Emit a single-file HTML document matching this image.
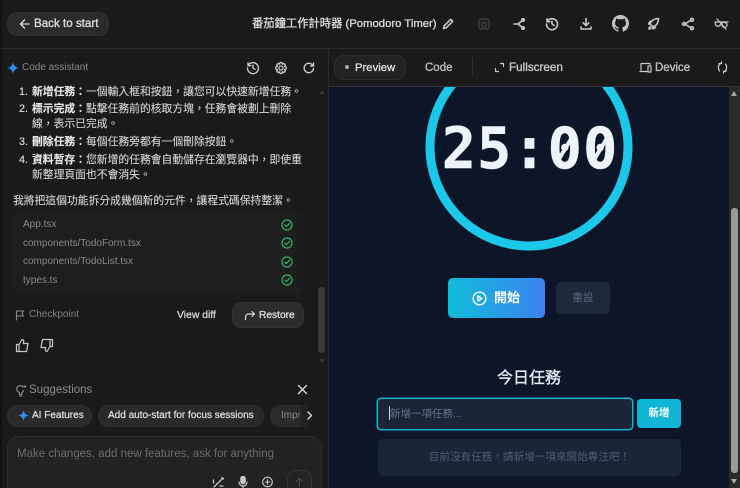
<!DOCTYPE html>
<html><head><meta charset="utf-8"><style>
*{box-sizing:border-box}
html,body{margin:0;padding:0;width:740px;height:488px;overflow:hidden;background:#1a1a1a}
#r{position:relative;width:740px;height:488px;overflow:hidden;background:#1a1a1a;color:#dcdcdc;font-family:"Liberation Sans","Noto Sans CJK TC",sans-serif}
.a{position:absolute;white-space:nowrap}
svg{position:absolute;fill:none;stroke:#c8c8c8;stroke-width:1.6;stroke-linecap:round;stroke-linejoin:round}
.m{-webkit-text-stroke:.35px currentColor}
.zh{font-size:10.8px;line-height:16px;color:#d4d4d4;-webkit-text-stroke:.12px currentColor}
.zh b{color:#e6e6e6}
.zh i{font-style:normal;display:inline-block;width:13px;color:#e0e0e0}
.f{font-size:10px;color:#8a8a8a;left:23px}
.chip{position:absolute;top:405px;height:22px;border-radius:11px;background:#2a2a2a;border:1px solid #303030;font-size:10px;color:#d8d8d8;line-height:20px;white-space:nowrap;overflow:hidden;-webkit-text-stroke:.3px currentColor}
</style></head><body><div id="r">
<div class="a" style="left:0;top:0;width:2px;height:488px;background:#111"></div>
<div class="a" style="left:0;top:48px;width:740px;height:1px;background:#2a2a2a"></div>
<div class="a" style="left:7px;top:12px;width:102px;height:24px;border-radius:10px;background:#2b2b2b;border:1px solid #313131"></div>
<svg style="left:19px;top:18px" width="11" height="12" viewBox="0 0 11 12"><path d="M10 6H1.500M5.500 2L1.500 6l4 4" stroke="#ddd" stroke-width="1.300"/></svg>
<div class="a m" style="left:34px;top:17px;font-size:11.600px;color:#ddd;line-height:14px">Back to start</div>
<div class="a m" style="left:252px;top:16px;font-size:11.300px;color:#d8d8d8;line-height:16px">番茄鐘工作計時器 (Pomodoro Timer)</div>
<svg style="left:441px;top:17px" width="14" height="14" viewBox="0 0 14 14"><path d="M2.500 11.500l.7-2.700 6.500-6.500 2 2-6.500 6.500z"/></svg>
<svg style="left:478px;top:18px;stroke:#3c3c3c" width="12" height="12" viewBox="0 0 12 12"><rect x="1" y="1" width="10" height="10" rx="2"/><rect x="4" y="5" width="4" height="4"/></svg>
<svg style="left:512px;top:17px" width="14" height="14" viewBox="0 0 14 14"><path d="M2 7h4l5-4M6 7l5 4"/><circle cx="11" cy="3" r="1.200"/><circle cx="11" cy="11" r="1.200"/></svg>
<svg style="left:545px;top:17px" width="14" height="14" viewBox="0 0 14 14"><path d="M2.200 4.500A5.500 5.500 0 1 1 1.500 7M2 1.800v2.900h2.900M7 4.200V7l2 1.300"/></svg>
<svg style="left:579px;top:17px" width="14" height="14" viewBox="0 0 14 14"><path d="M7 1.500v7M4.200 5.800L7 8.600l2.800-2.800M2 10v2h10v-2"/></svg>
<svg style="left:612px;top:15px;fill:#c4c4c4;stroke:none" width="17" height="17" viewBox="0 0 16 16"><path d="M8 0C3.580 0 0 3.580 0 8c0 3.540 2.290 6.530 5.470 7.590.4.070.55-.17.550-.38 0-.19-.01-.82-.01-1.490-2.010.37-2.530-.49-2.690-.94-.09-.23-.48-.94-.82-1.130-.28-.15-.68-.52-.01-.53.630-.01 1.080.58 1.230.82.720 1.210 1.870.87 2.330.66.070-.52.280-.87.510-1.070-1.780-.2-3.640-.89-3.640-3.950 0-.87.310-1.590.82-2.150-.08-.2-.36-1.020.08-2.120 0 0 .67-.21 2.200.82.640-.18 1.320-.27 2-.27s1.360.09 2 .27c1.530-1.040 2.200-.82 2.200-.82.440 1.100.16 1.920.08 2.120.51.560.82 1.270.82 2.150 0 3.070-1.870 3.750-3.650 3.950.29.250.54.730.54 1.480 0 1.070-.01 1.930-.01 2.200 0 .21.150.460.550.380A8.010 8.010 0 0 0 16 8c0-4.420-3.580-8-8-8z"/></svg>
<svg style="left:647px;top:17px" width="14" height="14" viewBox="0 0 14 14"><path d="M5 9l-2-2c1-3 4-5.500 8.500-5.500C11.500 6 9 9 6 10zM3 7H1.500l1.500-2.500M6 10.500v1.500l2.500-1.500M3 10c-1 .5-1 2-1 2s1.500 0 2-1"/></svg>
<svg style="left:681px;top:17px" width="14" height="14" viewBox="0 0 14 14"><path d="M4 7l6-4M4 7l6 4"/><circle cx="3" cy="7" r="1.400"/><circle cx="11" cy="2.800" r="1.400"/><circle cx="11" cy="11.200" r="1.400"/></svg>
<svg style="left:714px;top:17px" width="15" height="14" viewBox="0 0 15 14"><path d="M1.500 5.500a2.500 2.500 0 0 0 5 2c1-1.500 2-2 3.500-2a2.500 2.500 0 0 1 3 2 2.500 2.500 0 0 1-5 .5M3 2l9 10M1 5h13" stroke-width="1.300"/></svg>

<svg style="left:7px;top:62px;fill:#2f8cf0;stroke:none" width="12" height="12" viewBox="0 0 12 12"><path d="M6 0C6.500 3.500 8.500 5.500 12 6 8.500 6.500 6.500 8.500 6 12 5.500 8.500 3.500 6.500 0 6 3.500 5.500 5.500 3.500 6 0z"/></svg>
<div class="a" style="left:22px;top:61px;font-size:10px;color:#888;line-height:14px">Code assistant</div>
<svg style="left:246px;top:61px" width="14" height="14" viewBox="0 0 14 14"><path d="M2.200 4.500A5.500 5.500 0 1 1 1.500 7M2 1.800v2.900h2.900M7 4.200V7l2 1.300" stroke-width="1.400"/></svg>
<svg style="left:274px;top:61px" width="14" height="14" viewBox="0 0 14 14"><circle cx="7" cy="7" r="2" stroke-width="1.300"/><path d="M6 1.500h2l.4 1.700 1.600-.7 1.400 1.400-.9 1.500 1.700.6v2l-1.700.5.900 1.600-1.400 1.400-1.600-.8-.4 1.800H6l-.4-1.800-1.600.8-1.400-1.400.9-1.600-1.700-.5v-2l1.700-.6-.9-1.500L4 2.500l1.600.7z" stroke-width="1.300"/></svg>
<svg style="left:302px;top:61px" width="14" height="14" viewBox="0 0 14 14"><path d="M11.500 7.500A4.700 4.700 0 1 1 10 3.500l1.500 1.500M11.500 2v3h-3" stroke-width="1.400"/></svg>

<div class="a" style="left:328px;top:49px;width:1px;height:439px;background:#2a2a2a"></div>
<div class="a" style="left:334px;top:55px;width:72px;height:25px;border-radius:10px;background:#232323;border:1px solid #2f2f2f"></div>
<div class="a" style="left:345px;top:65px;width:4px;height:4px;border-radius:50%;background:#aaa"></div>
<div class="a m" style="left:355px;top:61px;font-size:11.300px;color:#ddd;line-height:14px">Preview</div>
<div class="a m" style="left:425px;top:61px;font-size:11.500px;color:#bbb;line-height:14px">Code</div>
<div class="a" style="left:472px;top:58px;width:1px;height:19px;background:#2e2e2e"></div>
<svg style="left:494px;top:62px" width="11" height="11" viewBox="0 0 11 11"><path d="M1.500 6.500v3h3M6.500 1.500h3v3" stroke-width="1.200"/></svg>
<div class="a m" style="left:509px;top:61px;font-size:11.700px;color:#c8c8c8;line-height:14px">Fullscreen</div>
<svg style="left:639px;top:61px" width="13" height="13" viewBox="0 0 13 13"><path d="M2 9V2.500h9v1M1 10.500h7M9 5h3v6H9z" stroke-width="1.200"/></svg>
<div class="a m" style="left:655px;top:61px;font-size:11.500px;color:#c0c0c0;line-height:14px">Device</div>
<svg style="left:716px;top:61px" width="13" height="13" viewBox="0 0 13 13"><path d="M5 2.500C2.500 3 1.500 7 3.500 10M8 10.500c2.500-.5 3.500-4.500 1.500-7.500M3 2.500h2.500V1M10 10.500H7.500V12" stroke-width="1.300"/></svg>

<!-- chat text -->
<div class="a zh" style="left:19px;top:84px"><i>1.</i><b>新增任務：</b>一個輸入框和按鈕，讓您可以快速新增任務。</div>
<div class="a zh" style="left:19px;top:101px"><i>2.</i><b>標示完成：</b>點擊任務前的核取方塊，任務會被劃上刪除</div>
<div class="a zh" style="left:32px;top:116px">線，表示已完成。</div>
<div class="a zh" style="left:19px;top:134px"><i>3.</i><b>刪除任務：</b>每個任務旁都有一個刪除按鈕。</div>
<div class="a zh" style="left:19px;top:152px"><i>4.</i><b>資料暫存：</b>您新增的任務會自動儲存在瀏覽器中，即使重</div>
<div class="a zh" style="left:32px;top:167px">新整理頁面也不會消失。</div>
<div class="a zh" style="left:13px;top:193px">我將把這個功能拆分成幾個新的元件，讓程式碼保持整潔。</div>

<div class="a" style="left:13px;top:212px;width:290px;height:81px;border-radius:6px;background:#1e1e1e"></div>
<div class="a f" style="top:218px;line-height:14px">App.tsx</div>
<div class="a f" style="top:237px;line-height:14px">components/TodoForm.tsx</div>
<div class="a f" style="top:255px;line-height:14px">components/TodoList.tsx</div>
<div class="a f" style="top:274px;line-height:14px">types.ts</div>
<svg style="left:281px;top:219px;stroke:#2fb566" width="12" height="12" viewBox="0 0 12 12"><circle cx="6" cy="6" r="5" stroke-width="1.200"/><path d="M3.700 6l1.600 1.600L8.500 4.400" stroke-width="1.200"/></svg>
<svg style="left:281px;top:237px;stroke:#2fb566" width="12" height="12" viewBox="0 0 12 12"><circle cx="6" cy="6" r="5" stroke-width="1.200"/><path d="M3.700 6l1.600 1.600L8.500 4.400" stroke-width="1.200"/></svg>
<svg style="left:281px;top:256px;stroke:#2fb566" width="12" height="12" viewBox="0 0 12 12"><circle cx="6" cy="6" r="5" stroke-width="1.200"/><path d="M3.700 6l1.600 1.600L8.500 4.400" stroke-width="1.200"/></svg>
<svg style="left:281px;top:274px;stroke:#2fb566" width="12" height="12" viewBox="0 0 12 12"><circle cx="6" cy="6" r="5" stroke-width="1.200"/><path d="M3.700 6l1.600 1.600L8.500 4.400" stroke-width="1.200"/></svg>

<svg style="left:14px;top:309px;stroke:#8a8a8a" width="12" height="12" viewBox="0 0 12 12"><path d="M2.500 11V2h7L8 4.500 9.500 7h-7" stroke-width="1.100"/></svg>
<div class="a" style="left:29px;top:308px;font-size:10px;color:#808080;line-height:14px">Checkpoint</div>
<div class="a m" style="left:177px;top:309px;font-size:10.400px;color:#cfcfcf;line-height:14px">View diff</div>
<div class="a" style="left:232px;top:302px;width:72px;height:26px;border-radius:10px;background:#2c2c2c;border:1px solid #333"></div>
<svg style="left:244px;top:309px" width="12" height="12" viewBox="0 0 12 12"><path d="M10.500 5h-6a3 3 0 0 0-3 3v2.500M8 2.500L10.500 5 8 7.500" stroke-width="1.200" stroke="#ddd"/></svg>
<div class="a m" style="left:259px;top:309px;font-size:10.200px;color:#d8d8d8;line-height:14px">Restore</div>
<svg style="left:15px;top:338px" width="15" height="15" viewBox="0 0 15 15"><path d="M1.500 6.500h2.500v7H1.500zM4 6.500L7 1.500c1.200 0 2 1 1.700 2.200L8.300 5.500H13l-1.500 8H4" stroke-width="1.200"/></svg>
<svg style="left:39px;top:338px" width="15" height="15" viewBox="0 0 15 15"><path d="M13.500 8.500H11v-7h2.500zM11 8.500L8 13.500c-1.200 0-2-1-1.700-2.200l.4-1.800H2l1.500-8H11" stroke-width="1.200"/></svg>

<!-- left scrollbar -->
<div class="a" style="left:318px;top:287px;width:7px;height:66px;border-radius:4px;background:#3a3a3a"></div>
<div class="a" style="left:319px;top:90px;border:3px solid transparent;border-bottom:4px solid #3a3a3a;border-top:0"></div>
<div class="a" style="left:319px;top:359px;border:3px solid transparent;border-top:4px solid #3a3a3a;border-bottom:0"></div>

<svg style="left:15px;top:384px;stroke:#8f8f8f" width="13" height="13" viewBox="0 0 13 13"><path d="M8 3a3.500 3.500 0 1 0-3.500 5.500V10.500H7V8.500c.7-.4 1.200-1 1.500-1.800M4.500 12H7" stroke-width="1.100"/><path d="M10 1.500v2M9 2.500h2" stroke-width="1"/></svg>
<div class="a" style="left:29px;top:383px;font-size:11.500px;color:#8c8c8c;line-height:15px">Suggestions</div>
<svg style="left:296px;top:383px" width="13" height="13" viewBox="0 0 13 13"><path d="M2.500 2.500l8 8M10.500 2.500l-8 8" stroke="#ddd" stroke-width="1.300"/></svg>

<div class="chip" style="left:7px;width:85px;padding-left:24px">AI Features</div>
<svg style="left:18px;top:410px;fill:#2f8cf0;stroke:none" width="11" height="11" viewBox="0 0 12 12"><path d="M6 0C6.500 3.500 8.500 5.500 12 6 8.500 6.500 6.500 8.500 6 12 5.500 8.500 3.500 6.500 0 6 3.500 5.500 5.500 3.500 6 0z"/></svg>
<div class="chip" style="left:98px;width:166px;padding-left:9px">Add auto-start for focus sessions</div>
<div class="chip" style="left:270px;width:52px;padding-left:10px;border-radius:11px 0 0 11px;border-right:0;color:#8a8a8a;-webkit-text-stroke:0">Impr</div>
<div class="a" style="left:296px;top:404px;width:28px;height:24px;background:linear-gradient(90deg,rgba(26,26,26,0),#1a1a1a 55%)"></div>
<svg style="left:304px;top:410px" width="11" height="11" viewBox="0 0 11 11"><path d="M4 2l3.500 3.500L4 9" stroke="#ddd" stroke-width="1.300"/></svg>

<div class="a" style="left:7px;top:436px;width:315px;height:70px;border-radius:12px;background:#222;border:1px solid #2e2e2e"></div>
<div class="a" style="left:17px;top:447px;font-size:11.500px;color:#6c6c6c;line-height:15px">Make changes, add new features, ask for anything</div>
<svg style="left:212px;top:476px" width="13" height="12" viewBox="0 0 13 12"><path d="M2 11l8-8M1.500 4v3M8 10h3M10 1.500l1.500 1.500" stroke-width="1.300"/></svg>
<svg style="left:237px;top:476px" width="12" height="12" viewBox="0 0 12 12"><rect x="4" y="0.500" width="4" height="7" rx="2" fill="#c8c8c8"/><path d="M2 6a4 4 0 0 0 8 0M6 10v2" stroke-width="1.200"/></svg>
<svg style="left:261px;top:476px" width="13" height="12" viewBox="0 0 13 13"><circle cx="6.500" cy="6.500" r="5.200" stroke-width="1.200"/><path d="M6.500 4v5M4 6.500h5" stroke-width="1.200"/></svg>
<div class="a" style="left:287px;top:470px;width:25px;height:30px;border-radius:9px;border:1px solid #333;background:#232323"></div>
<svg style="left:294px;top:477px;stroke:#4a4a4a" width="11" height="11" viewBox="0 0 11 11"><path d="M5.500 9.500v-8M2.500 4.500l3-3 3 3" stroke-width="1.100"/></svg>

<!-- preview -->
<div class="a" style="left:329px;top:86px;width:411px;height:1px;background:#333"></div>
<div class="a" style="left:329px;top:87px;width:400px;height:401px;background:#0d1629;overflow:hidden">
  <svg style="left:96px;top:-44px;stroke:#1cc8ea;stroke-width:9" width="208" height="208" viewBox="0 0 208 208"><circle cx="104" cy="104" r="99"/></svg>
  <div class="a" style="left:112px;top:27px;width:178px;text-align:center;font-family:'DejaVu Sans Mono',monospace;font-weight:bold;font-size:57px;letter-spacing:1px;line-height:70px;color:#eef3f9;-webkit-text-stroke:.4px #eef3f9">25:00</div>
  <svg style="left:225px;top:50px;stroke:#eef3f9;stroke-width:4;stroke-linecap:butt" width="56" height="24" viewBox="0 0 56 24"><path d="M5 22L17 2M40.500 22L52.500 2"/></svg>
  <div class="a" style="left:119px;top:191px;width:97px;height:40px;border-radius:5px;background:linear-gradient(90deg,#12bcd8,#3b82f0)"></div>
  <svg style="left:143px;top:204px;stroke:#fff;stroke-width:1.400" width="15" height="15" viewBox="0 0 15 15"><circle cx="7.500" cy="7.500" r="6.300"/><path d="M6 5l4 2.500L6 10z"/></svg>
  <div class="a" style="left:165px;top:202px;font-size:13px;font-weight:bold;color:#fff;line-height:18px">開始</div>
  <div class="a" style="left:227px;top:195px;width:54px;height:32px;border-radius:5px;background:#1e293b;text-align:center;font-size:10.500px;line-height:32px;color:#5b6a80">重設</div>
  <div class="a m" style="left:168px;top:282px;font-size:16px;line-height:20px;color:#e6ebf2">今日任務</div>
  <div class="a" style="left:48px;top:311px;width:256px;height:32px;border-radius:4px;background:#1b2538;border:1px solid #14b4cf;box-shadow:0 0 0 .5px #14b4cf"></div>
  <div class="a" style="left:60px;top:319px;width:1px;height:14px;background:#cbd5e1"></div>
  <div class="a" style="left:61px;top:320px;font-size:10.500px;line-height:15px;color:#64748b">新增一項任務...</div>
  <div class="a" style="left:308px;top:312px;width:44px;height:29px;border-radius:4px;background:#0fb5d5;text-align:center;font-size:10.500px;font-weight:bold;line-height:29px;color:#fff">新增</div>
  <div class="a" style="left:49px;top:352px;width:303px;height:37px;border-radius:5px;background:#1b2538;text-align:center;font-size:10.500px;line-height:37px;color:#4f5d73;letter-spacing:.1px">目前沒有任務，請新增一項來開始專注吧！</div>
</div>
<!-- right scrollbar -->
<div class="a" style="left:729px;top:87px;width:11px;height:401px;background:#2a2a2a"></div>
<div class="a" style="left:731px;top:208px;width:7px;height:265px;border-radius:3px;background:#9a9a9a"></div>
<div class="a" style="left:731px;top:91px;border:3.500px solid transparent;border-bottom:5px solid #a8a8a8;border-top:0"></div>
<div class="a" style="left:731px;top:479px;border:3.500px solid transparent;border-top:5px solid #a8a8a8;border-bottom:0"></div>
</div></body></html>
